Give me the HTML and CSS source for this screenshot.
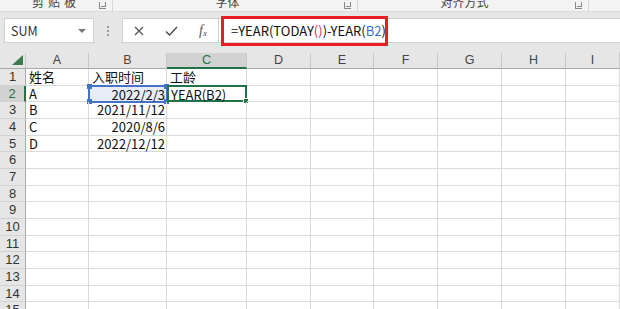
FILE: index.html
```html
<!DOCTYPE html>
<html lang="zh-CN">
<head>
    <meta charset="UTF-8">
    <title>工龄计算</title>
    <link rel="stylesheet" href="styles.css">
</head>
<body>
<div class="ribbon">
    <div class="group g1"><span class="label">剪贴板</span><span class="launcher"></span></div>
    <div class="group g2"><span class="label">字体</span><span class="launcher"></span></div>
    <div class="group g3"><span class="label">对齐方式</span><span class="launcher"></span></div>
</div>

<div class="fbar">
    <div class="namebox"><span>SUM</span><span class="caret"></span></div>
    <div class="grip"><i></i><i></i><i></i></div>
    <div class="fbtns">
        <svg width="10" height="10" viewBox="0 0 10 10"><path d="M1 1L9 9M9 1L1 9" stroke="#555" stroke-width="1.3"/></svg>
        <svg width="13" height="10" viewBox="0 0 13 10"><path d="M1 5.5L4.5 9L12 1" stroke="#555" stroke-width="1.6" fill="none"/></svg>
        <span class="fx">f<sub>x</sub></span>
    </div>
    <div class="finput">
        <div class="formula">=YEAR(TODAY<span class="p1">(</span><span class="p2">)</span>)-YEAR(<span class="ref">B2</span>)<span class="cursor"></span></div>
        <div class="callout"></div>
    </div>
</div>

<div class="sheet" id="sheet"></div>

<script>
    const cols = ['A', 'B', 'C', 'D', 'E', 'F', 'G', 'H', 'I'];
    const data = {
        1: ['姓名', '入职时间', '工龄'],
        2: ['A', '2022/2/3', 'YEAR(B2)'],
        3: ['B', '2021/11/12'],
        4: ['C', '2020/8/6'],
        5: ['D', '2022/12/12']
    };
    const sheet = document.getElementById('sheet');

    function cell(cls, text) {
        const div = document.createElement('div');
        div.className = cls;
        if (text) div.textContent = text;
        sheet.appendChild(div);
        return div;
    }

    // header row
    cell('corner').innerHTML = '<svg width="11" height="10" viewBox="0 0 11 10"><polygon points="11,0 11,10 0,10" fill="#3d7a4f"/></svg>';
    cols.forEach(c => cell(c === 'C' ? 'colhead sel' : 'colhead', c));

    for (let r = 1; r <= 15; r++) {
        cell(r === 2 ? 'rowhead sel' : 'rowhead', String(r));
        const row = data[r] || [];
        cols.forEach((c, i) => {
            let cls = 'cell';
            if (c === 'B' && r > 1) cls += ' num';
            if (c === 'B' && r === 2) cls += ' ref-range';
            if (c === 'C' && r === 2) cls += ' active';
            const el = cell(cls, row[i]);
            if (c === 'B' && r === 2) {
                el.innerHTML += '<i class="h tl"></i><i class="h tr"></i><i class="h bl"></i><i class="h br"></i>';
            }
            if (c === 'C' && r === 2) {
                el.innerHTML += '<i class="fill"></i>';
            }
        });
    }
</script>
</body>
</html>
```

FILE: styles.css
```css
* {
    box-sizing: border-box;
}

body {
    margin: 0;
    width: 620px;
    height: 309px;
    overflow: hidden;
    background: #e6e6e6;
    font-family: "Noto Sans CJK SC", "Noto Sans", sans-serif;
    color: #222;
}

/* ribbon (cut off at the top) */
.ribbon {
    display: flex;
    height: 12px;
    background: #f3f3f3;
    border-bottom: 1px solid #dcdcdc;
    overflow: hidden;
}

.group {
    position: relative;
    display: flex;
    justify-content: center;
    border-right: 1px solid #d6d6d6;
    height: 11px;
}

.g1 { width: 113px; padding-right: 0; }
.g2 { width: 245px; padding-right: 15px; }
.g3 { width: 231px; padding-right: 17px; }

.label {
    font-size: 12px;
    line-height: 12px;
    color: #444;
    margin-top: -4px;
}

.g1 .label {
    letter-spacing: 4px;
}

.launcher {
    position: absolute;
    right: 6px;
    top: 2px;
    width: 7px;
    height: 7px;
    border-left: 1px solid #888;
    border-bottom: 1px solid #888;
}

.launcher::after {
    content: "";
    position: absolute;
    left: 1px;
    bottom: 1px;
    width: 4px;
    height: 4px;
    border-right: 1px solid #888;
    border-bottom: 1px solid #888;
}

/* formula bar */
.fbar {
    display: flex;
    align-items: flex-start;
    height: 41px;
    padding: 6px 0 0 4px;
}

.namebox {
    display: flex;
    align-items: center;
    justify-content: space-between;
    width: 90px;
    height: 25px;
    padding: 0 7px 0 6px;
    background: #fff;
    border: 1px solid #d0d0d0;
    font-size: 12.5px;
    color: #333;
}

.caret {
    width: 0;
    height: 0;
    border-left: 4px solid transparent;
    border-right: 4px solid transparent;
    border-top: 4px solid #777;
}

.grip {
    display: flex;
    flex-direction: column;
    justify-content: center;
    align-items: center;
    gap: 2px;
    width: 28px;
    height: 25px;
}

.grip i {
    width: 2px;
    height: 2px;
    background: #999;
}

.fbtns {
    display: flex;
    align-items: center;
    justify-content: space-between;
    width: 96px;
    height: 25px;
    padding: 0 11px;
    background: #fff;
    border: 1px solid #d0d0d0;
    border-right: none;
}

.fx {
    font-family: "Liberation Serif", serif;
    font-style: italic;
    font-size: 14px;
    color: #555;
}

.fx sub {
    font-size: 9px;
    vertical-align: -1px;
}

.finput {
    position: relative;
    flex: 1;
    height: 25px;
    background: #fff;
    border: 1px solid #d0d0d0;
    border-right: none;
    padding-left: 12px;
}

.formula {
    font-size: 13px;
    line-height: 23px;
    color: #111;
    white-space: nowrap;
}

.p1 { color: #e02a2a; }
.p2 { color: #c5307e; }
.ref { color: #3b6cc6; }

.cursor {
    display: inline-block;
    width: 1px;
    height: 15px;
    background: #111;
    vertical-align: -3px;
    margin-left: 1px;
}

.callout {
    position: absolute;
    left: 2px;
    top: -3px;
    width: 167px;
    height: 30px;
    border: 3px solid #ec1c24;
}

/* sheet */
.sheet {
    display: grid;
    grid-template-columns: 26px 63px 78px 80px 64px 63px 64px 64px 64px 1fr;
    grid-template-rows: 16px;
    grid-auto-rows: 16.67px;
    background: #fff;
}

.corner,
.colhead,
.rowhead {
    background: #e6e6e6;
    color: #444;
    font-family: "Liberation Sans", sans-serif;
    font-size: 12.5px;
}

.corner {
    display: flex;
    align-items: flex-end;
    justify-content: flex-end;
    padding: 0 2px 3px 0;
    border-right: 1px solid #c8c8c8;
    border-bottom: 1px solid #a8a8a8;
}

.colhead {
    text-align: center;
    line-height: 15px;
    border-right: 1px solid #c8c8c8;
    border-bottom: 1px solid #a8a8a8;
}

.rowhead {
    text-align: center;
    line-height: 16px;
    border-right: 1px solid #a8a8a8;
    border-bottom: 1px solid #d2d2d2;
    font-size: 13px;
    color: #333;
}

.colhead.sel {
    background: #d2d2d2;
    color: #217346;
    border-bottom: 2px solid #217346;
}

.rowhead.sel {
    background: #d2d2d2;
    color: #217346;
    border-right: 2px solid #217346;
}

.cell {
    position: relative;
    padding: 0 2px 0 3px;
    font-size: 13px;
    line-height: 16px;
    color: #111;
    white-space: nowrap;
    border-right: 1px solid #dadada;
    border-bottom: 1px solid #dadada;
}

.cell.num {
    text-align: right;
    padding-right: 1px;
}

.ref-range {
    background: #e7ecf6;
    border: 1px solid #4472c4;
    outline: 1px solid #4472c4;
}

.h {
    position: absolute;
    width: 5px;
    height: 5px;
    background: #4472c4;
}

.tl { left: -3px; top: -3px; }
.tr { right: -3px; top: -3px; }
.bl { left: -3px; bottom: -3px; }
.br { right: -3px; bottom: -3px; }

.active {
    border: 2px solid #217346;
    margin-top: -1px;
    padding-left: 2px;
}

.fill {
    position: absolute;
    right: -4px;
    bottom: -4px;
    width: 6px;
    height: 6px;
    background: #217346;
    border: 1px solid #fff;
}
```
